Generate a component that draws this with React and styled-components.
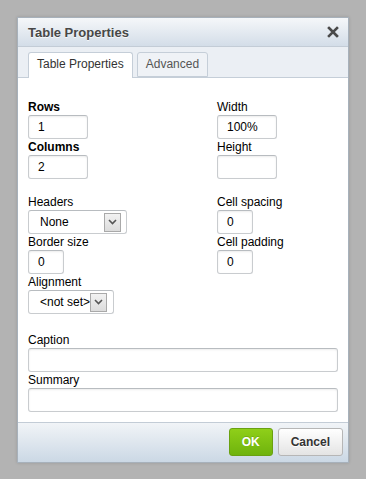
import React from 'react';
import styled, { createGlobalStyle } from 'styled-components';

const GlobalStyle = createGlobalStyle`
  html, body {
    margin: 0;
    padding: 0;
    background: #b3b3b3;
    font-family: "Liberation Sans", Arial, sans-serif;
  }
`;

const Page = styled.div`
  width: 366px;
  height: 479px;
  padding: 17px 0 0 17px;
  box-sizing: border-box;
`;

const Dialog = styled.div`
  width: 332px;
  height: 446px;
  box-sizing: border-box;
  border: 1px solid #a7b1bb;
  background: #fff;
  display: flex;
  flex-direction: column;
  box-shadow: 0 0 3px rgba(0, 0, 0, 0.15);
`;

const TitleBar = styled.div`
  height: 29px;
  box-sizing: border-box;
  border-bottom: 1px solid #c3ccd6;
  background: linear-gradient(to bottom, #f5f7f9, #d3dde8);
  display: flex;
  align-items: center;
  justify-content: space-between;
  padding: 0 9px 0 10px;
`;

const Title = styled.div`
  font-size: 13px;
  font-weight: bold;
  color: #474747;
  text-shadow: 0 1px 0 rgba(255, 255, 255, 0.75);
`;

const Close = styled.svg`
  width: 12px;
  height: 12px;
  display: block;
`;

const TabStrip = styled.div`
  height: 31px;
  box-sizing: border-box;
  padding: 5px 0 0 10px;
  background: #ebeff4;
  border-bottom: 1px solid #c5ced8;
  display: flex;
  gap: 4px;
`;

const Tab = styled.div`
  height: ${p => (p.$active ? '26px' : '25px')};
  box-sizing: border-box;
  padding: 0 8px;
  border: 1px solid #c5ced8;
  border-bottom: ${p => (p.$active ? 'none' : '1px solid #c5ced8')};
  border-radius: 3px 3px 0 0;
  background: ${p => (p.$active ? '#fff' : '#eff2f6')};
  color: ${p => (p.$active ? '#333' : '#555')};
  font-size: 12px;
  line-height: 23px;
  white-space: nowrap;
`;

const Content = styled.div`
  flex: 1;
  padding: 21px 10px 10px 10px;
  background: #fff;
`;

const Columns = styled.div`
  display: grid;
  grid-template-columns: 189px 1fr;
`;

const Column = styled.div`
  display: flex;
  flex-direction: column;
  align-items: flex-start;
`;

const Label = styled.div`
  font-size: 12px;
  line-height: 16px;
  height: 16px;
  color: #000;
  white-space: nowrap;
  font-weight: ${p => (p.$bold ? 'bold' : 'normal')};
  margin-top: ${p => (p.$gap ? `${p.$gap}px` : '0')};
`;

const Input = styled.div`
  width: ${p => p.$w}px;
  height: 24px;
  box-sizing: border-box;
  border: 1px solid #c9cccf;
  border-top-color: #b8bcc0;
  border-radius: 3px;
  box-shadow: inset 0 1px 2px rgba(0, 0, 0, 0.08);
  background: #fff;
  font-size: 12px;
  line-height: 22px;
  padding-left: 9px;
  color: #000;
  align-self: ${p => (p.$full ? 'stretch' : 'flex-start')};
`;

const Select = styled.div`
  width: ${p => p.$w}px;
  height: 24px;
  box-sizing: border-box;
  border: 1px solid #c9cccf;
  border-top-color: #b8bcc0;
  border-radius: 3px;
  background: #fff;
  display: flex;
  align-items: center;
  justify-content: space-between;
  padding: 0 ${p => p.$right || 5}px 0 11px;
  font-size: 12px;
  color: #000;
  white-space: nowrap;
`;

const Arrow = styled.div`
  flex-shrink: 0;
  width: 17px;
  height: 19px;
  box-sizing: border-box;
  border: 1px solid #a9a9a9;
  background: linear-gradient(to bottom, #f2f2f2, #dcdcdc);
  display: flex;
  align-items: center;
  justify-content: center;
`;

const Bottom = styled.div`
  margin-top: 18px;
  display: flex;
  flex-direction: column;
`;

const Footer = styled.div`
  height: 40px;
  box-sizing: border-box;
  border-top: 1px solid #c3ccd6;
  background: linear-gradient(to bottom, #f1f4f7, #cbd8e5);
  display: flex;
  justify-content: flex-end;
  gap: 5px;
  padding: 5px 5px 0 0;
`;

const Button = styled.div`
  height: 28px;
  box-sizing: border-box;
  padding: 0 12px;
  border-radius: 3px;
  font-size: 12px;
  font-weight: bold;
  line-height: 26px;
  border: 1px solid ${p => (p.$primary ? '#6aa111' : '#b6b6b6')};
  background: ${p =>
    p.$primary
      ? 'linear-gradient(to bottom, #8fcf19, #6fb30d)'
      : 'linear-gradient(to bottom, #ffffff, #e4e4e4)'};
  color: ${p => (p.$primary ? '#fff' : '#333')};
  text-shadow: ${p => (p.$primary ? '0 -1px 0 rgba(0,0,0,0.15)' : '0 1px 0 #fff')};
`;

const Chevron = () => (
  <svg width="9" height="6" viewBox="0 0 9 6">
    <path d="M1 1 L4.5 4.5 L8 1" fill="none" stroke="#555" strokeWidth="1.6" />
  </svg>
);

export default function App() {
  return (
    <>
      <GlobalStyle />
      <Page>
        <Dialog>
          <TitleBar>
            <Title>Table Properties</Title>
            <Close viewBox="0 0 12 12">
              <path d="M2 2 L10 10 M10 2 L2 10" stroke="#4a4a4a" strokeWidth="2.6" strokeLinecap="square" />
            </Close>
          </TitleBar>
          <TabStrip>
            <Tab $active>Table Properties</Tab>
            <Tab>Advanced</Tab>
          </TabStrip>
          <Content>
            <Columns>
              <Column>
                <Label $bold>Rows</Label>
                <Input $w={60}>1</Input>
                <Label $bold>Columns</Label>
                <Input $w={60}>2</Input>
                <Label $gap={15}>Headers</Label>
                <Select $w={99}>
                  <span>None</span>
                  <Arrow><Chevron /></Arrow>
                </Select>
                <Label>Border size</Label>
                <Input $w={36}>0</Input>
                <Label>Alignment</Label>
                <Select $w={86} $right={6}>
                  <span>&lt;not set&gt;</span>
                  <Arrow><Chevron /></Arrow>
                </Select>
              </Column>
              <Column>
                <Label>Width</Label>
                <Input $w={60}>100%</Input>
                <Label>Height</Label>
                <Input $w={60}></Input>
                <Label $gap={15}>Cell spacing</Label>
                <Input $w={36}>0</Input>
                <Label>Cell padding</Label>
                <Input $w={36}>0</Input>
              </Column>
            </Columns>
            <Bottom>
              <Label>Caption</Label>
              <Input $full />
              <Label>Summary</Label>
              <Input $full />
            </Bottom>
          </Content>
          <Footer>
            <Button $primary>OK</Button>
            <Button>Cancel</Button>
          </Footer>
        </Dialog>
      </Page>
    </>
  );
}
